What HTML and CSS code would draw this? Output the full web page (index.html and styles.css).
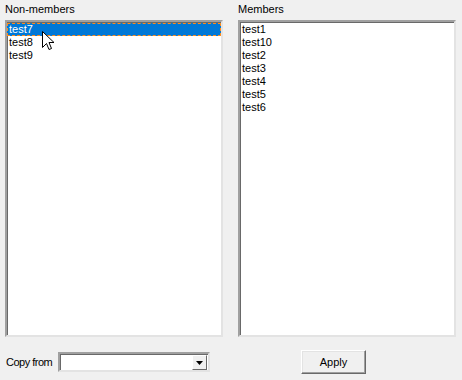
FILE: index.html
```html
<!DOCTYPE html>
<html lang="en">
<head>
    <meta charset="UTF-8">
    <title>Members</title>
    <link rel="stylesheet" href="styles.css">
</head>
<body>
    <div id="dialog">
        <div class="lists">
            <div class="column">
                <div class="caption">Non-members</div>
                <div class="listbox">
                    <div class="item selected">test7</div>
                    <div class="item">test8</div>
                    <div class="item">test9</div>
                </div>
            </div>
            <div class="column">
                <div class="caption">Members</div>
                <div class="listbox">
                    <div class="item">test1</div>
                    <div class="item">test10</div>
                    <div class="item">test2</div>
                    <div class="item">test3</div>
                    <div class="item">test4</div>
                    <div class="item">test5</div>
                    <div class="item">test6</div>
                </div>
            </div>
        </div>

        <div class="bottom">
            <div class="copy">
                <span class="copy-label">Copy from</span>
                <div class="combo">
                    <div class="combo-btn">
                        <svg width="7" height="4" viewBox="0 0 7 4"><polygon points="0,0 7,0 3.5,4" fill="#000"/></svg>
                    </div>
                </div>
            </div>
            <div class="apply-wrap">
                <div class="button">Apply</div>
            </div>
        </div>

        <!-- mouse pointer -->
        <svg class="cursor" width="13" height="20" viewBox="0 0 13 20">
            <path d="M0.5 0.5 L0.5 16.5 L4.5 12.5 L7 18.5 L9.5 17.5 L7 11.5 L12 11.5 Z" fill="#fff" stroke="#000" stroke-width="1" stroke-linejoin="miter"/>
        </svg>
    </div>
</body>
</html>
```

FILE: styles.css
```css
body {
    margin: 0;
    background: #f0f0f0;
    font-family: "Liberation Sans", Arial, sans-serif;
    font-size: 11px;
    color: #000;
}
#dialog {
    position: relative;
    width: 462px;
    height: 380px;
}
.lists {
    display: grid;
    grid-template-columns: 218px 218px;
    column-gap: 15px;
    padding: 3px 0 0 5px;
}
.caption {
    height: 13px;
    line-height: 13px;
    margin-bottom: 4px;
}
.listbox {
    height: 312px;
    background: #fff;
    border-top: 2px solid #a0a0a0;
    border-left: 2px solid #a0a0a0;
    border-right: 2px solid #e3e3e3;
    border-bottom: 2px solid #e3e3e3;
    box-shadow: inset 1px 1px 0 #696969;
    padding-top: 1px;
}
.item {
    height: 13px;
    line-height: 13px;
    padding-left: 2px;
    white-space: nowrap;
}
.item.selected {
    background: #0078d7;
    color: #fff;
    outline: 1px dashed #ff8c1a;
    outline-offset: -1px;
}
.bottom {
    display: flex;
    align-items: center;
    padding: 13px 0 0 6px;
}
.copy {
    display: flex;
    align-items: center;
    width: 232px;
}
.copy-label {
    width: 46px;
    margin-right: 6px;
    letter-spacing: -0.5px;
    white-space: nowrap;
}
.combo {
    width: 148px;
    height: 16px;
    background: #fff;
    border-top: 2px solid #a0a0a0;
    border-left: 2px solid #a0a0a0;
    border-right: 2px solid #e3e3e3;
    border-bottom: 2px solid #e3e3e3;
    box-shadow: inset 1px 1px 0 #696969;
    display: flex;
    justify-content: flex-end;
}
.combo-btn {
    box-sizing: border-box;
    width: 15px;
    height: 15px;
    margin: 1px 1px 0 0;
    background: #f0f0f0;
    border-top: 1px solid #fff;
    border-left: 1px solid #fff;
    border-right: 1px solid #696969;
    border-bottom: 1px solid #696969;
    display: flex;
    align-items: center;
    justify-content: center;
}
.apply-wrap {
    padding-left: 63px;
}
.button {
    width: 63px;
    height: 22px;
    line-height: 22px;
    text-align: center;
    background: #f0f0f0;
    border-top: 1px solid #fff;
    border-left: 1px solid #fff;
    border-right: 1px solid #696969;
    border-bottom: 1px solid #696969;
    box-shadow: inset -1px -1px 0 #a0a0a0, inset 1px 1px 0 #e3e3e3;
}
.cursor {
    position: absolute;
    left: 42px;
    top: 31px;
}
```
